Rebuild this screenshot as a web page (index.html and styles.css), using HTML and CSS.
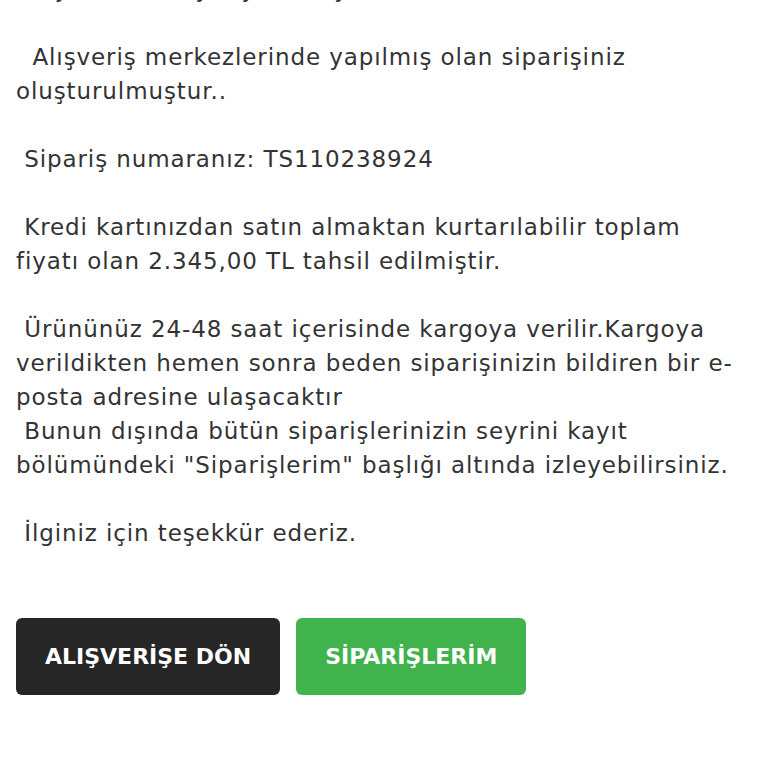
FILE: index.html
```html
<!DOCTYPE html>
<html lang="tr">
<head>
  <meta charset="UTF-8" />
  <meta name="viewport" content="width=device-width, initial-scale=1.0"/>
  <title>Sipariş Tamamlandı</title>
  <link rel="stylesheet" href="styles.css">
</head>
<body>

  <div class="siparis-sonuc">
    <!-- Mesaj -->
    <p class="mesaj"> Sayın Kaan Tay, Aydın Bey,<br><br>  Alışveriş merkezlerinde yapılmış olan siparişiniz oluşturulmuştur..<br><br> Sipariş numaranız: TS110238924<br><br> Kredi kartınızdan satın almaktan kurtarılabilir toplam fiyatı olan 2.345,00 TL tahsil edilmiştir.<br><br> Ürününüz 24-48 saat içerisinde kargoya verilir.Kargoya verildikten hemen sonra beden siparişinizin bildiren bir e-posta adresine ulaşacaktır<br> Bunun dışında bütün siparişlerinizin seyrini kayıt bölümündeki "Siparişlerim" başlığı altında izleyebilirsiniz.<br><br> İlginiz için teşekkür ederiz.</p>

    <!-- Botões -->
    <div class="botoes">
      <button class="btn btn-escuro">ALIŞVERİŞE DÖN</button>
      <button class="btn btn-verde">SİPARİŞLERİM</button>
    </div>
  </div>

</body>
</html>
```
FILE: styles.css
```css
/* Estilos gerais */
body {
  font-family: "DejaVu Sans", sans-serif;
  background-color: #fff;
  margin: 0;
  padding: 0;
  overflow: hidden;
}

/* Container (página rolada: primeira linha cortada no topo) */
.siparis-sonuc {
  padding: 0 20px 0 16px;
  margin-top: -28px;
}

.mesaj {
  margin: 0;
  font-size: 23px;
  line-height: 34px;
  letter-spacing: 0.9px;
  color: #333;
  white-space: pre-wrap;
}

/* Botões */
.botoes {
  display: flex;
  gap: 16px;
  margin-top: 68px;
}

.btn {
  height: 77px;
  padding: 0 29px;
  border: none;
  border-radius: 6px;
  font-family: "DejaVu Sans", sans-serif;
  font-size: 22px;
  font-weight: bold;
  color: #fff;
  cursor: pointer;
}

.btn-escuro {
  background: #262626;
}

.btn-verde {
  background: #41b34d;
}
```
